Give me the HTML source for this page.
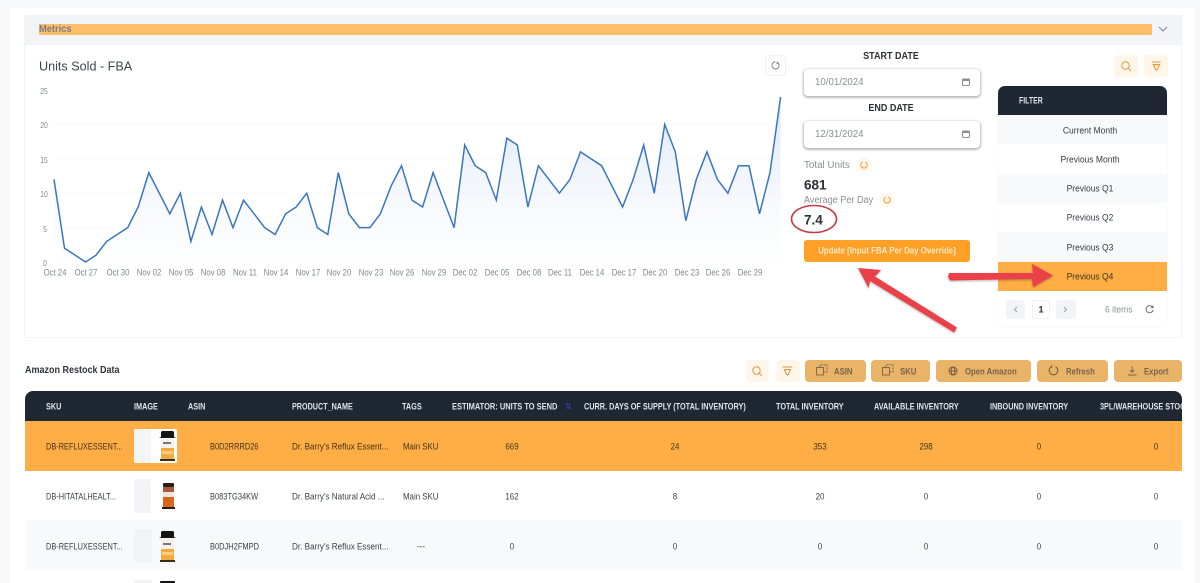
<!DOCTYPE html>
<html><head><meta charset="utf-8">
<style>
html,body{margin:0;padding:0}
body{width:1200px;height:583px;overflow:hidden;background:#fff;position:relative;font-family:"Liberation Sans",sans-serif;color:#333}
#w{position:absolute;left:0;top:0;width:1200px;height:583px;background:#fff;overflow:hidden;filter:blur(.35px)}
.b{position:absolute}
.t,.c{position:absolute;white-space:nowrap;line-height:1;margin-top:.5px}
.t{transform:translateY(-50%) scaleX(var(--s,1));transform-origin:left center}
.c{transform:translate(-50%,-50%) scaleX(var(--s,1))}
.ax{font-size:9px;color:#80868f;--s:.86}
.ay{font-size:8.5px;color:#80868f;--s:.8}
.h{font-size:9px;font-weight:bold;color:#dfe3ea;--s:.81}
.d{font-size:9px;color:#3a3f47;--s:.88}
.sk{--s:.82}.as{--s:.83}.pn{--s:.9}.tg{--s:.875}
.f{font-size:9px;color:#333a44;--s:.945}
.tb{position:absolute;top:360px;height:22px;background:#e9b368;border-radius:4px;font-size:9px;font-weight:bold;color:#76654c}
.tb span{position:absolute;top:50%;margin-top:.5px;transform:translateY(-50%) scaleX(.86);transform-origin:left center;white-space:nowrap;line-height:1}
.tb svg{position:absolute;top:4px}
.ib{position:absolute;background:#fff5e8;border-radius:4px}
svg{position:absolute;overflow:visible}
</style></head><body><div id="w">
<div class="b" style="left:0;top:0;width:1200px;height:8px;background:#f8f9fa"></div>
<div class="b" style="left:0;top:0;width:10px;height:583px;background:#f8f9fb"></div>
<div class="b" style="left:1195px;top:0;width:5px;height:583px;background:#f8f9fb"></div>

<!-- metrics panel -->
<div class="b" style="left:24px;top:15px;width:1158px;height:323px;border:1px solid #f1f2f4;border-radius:3px;box-sizing:border-box"></div>
<div class="b" style="left:25px;top:15px;width:1158px;height:30px;background:#f2f4f7"></div>
<div class="b" style="left:39px;top:24px;width:1113px;height:11px;background:#ffbe6b"></div>
<div class="t" style="left:39px;top:29.5px;font-size:10px;font-weight:bold;color:#7b7d80;--s:.93">Metrics</div>
<svg style="left:1158px;top:26px" width="10" height="6"><path d="M1 1l4 4 4-4" fill="none" stroke="#7d838c" stroke-width="1"/></svg>

<div class="t" style="left:39px;top:65px;font-size:13px;color:#3f444c;--s:.97">Units Sold - FBA</div>
<div class="b" style="left:765px;top:55px;width:21px;height:21px;border:1px solid #f0f1f3;border-radius:4px;box-sizing:border-box"></div>
<svg style="left:771px;top:61px" width="9" height="9" viewBox="0 0 9 9"><path d="M3 1.1A3.6 3.6 0 1 0 6 1.1M6 1.1V3M3 1.1L4 .4" fill="none" stroke="#777" stroke-width=".9"/></svg>

<!-- chart -->
<svg style="left:0;top:0" width="800" height="290">
<defs><linearGradient id="g" x1="0" y1="90" x2="0" y2="262" gradientUnits="userSpaceOnUse"><stop offset="0" stop-color="#bcd0ee" stop-opacity=".55"/><stop offset="1" stop-color="#e8effa" stop-opacity=".05"/></linearGradient></defs>
<g stroke="#f5f6f8" stroke-width=".6"><path d="M54 262H781M54 228H781M54 193H781M54 159H781M54 124H781"/></g>
<polygon fill="url(#g)" points="54,262 54,179.4 64.5,248.2 75.1,255.1 85.6,262 96.1,255.1 106.7,241.4 117.2,234.5 127.7,227.6 138.2,207 148.8,172.6 159.3,193.2 169.8,213.8 180.4,193.2 190.9,241.4 201.4,207 212,234.5 222.5,200.1 233,227.6 243.5,200.1 254.1,213.8 264.6,227.6 275.1,234.5 285.7,213.8 296.2,207 306.7,193.2 317.3,227.6 327.8,234.5 338.3,172.6 348.8,213.8 359.4,227.6 369.9,227.6 380.4,213.8 391,186.3 401.5,165.7 412,200.1 422.6,207 433.1,172.6 443.6,200.1 454.1,227.6 464.7,145 475.2,165.7 485.7,172.6 496.3,200.1 506.8,138.2 517.3,145 527.9,207 538.4,165.7 548.9,179.4 559.4,193.2 570,179.4 580.5,151.9 591,158.8 601.6,165.7 612.1,186.3 622.6,207 633.2,179.4 643.7,145 654.2,193.2 664.7,124.4 675.3,151.9 685.8,220.7 696.3,179.4 706.9,151.9 717.4,179.4 727.9,193.2 738.5,165.7 749,165.7 759.5,213.8 770,172.6 780.6,96.9 780.6,262"/>
<polyline fill="none" stroke="#3a75bf" stroke-width="1.5" points="54,179.4 64.5,248.2 75.1,255.1 85.6,262 96.1,255.1 106.7,241.4 117.2,234.5 127.7,227.6 138.2,207 148.8,172.6 159.3,193.2 169.8,213.8 180.4,193.2 190.9,241.4 201.4,207 212,234.5 222.5,200.1 233,227.6 243.5,200.1 254.1,213.8 264.6,227.6 275.1,234.5 285.7,213.8 296.2,207 306.7,193.2 317.3,227.6 327.8,234.5 338.3,172.6 348.8,213.8 359.4,227.6 369.9,227.6 380.4,213.8 391,186.3 401.5,165.7 412,200.1 422.6,207 433.1,172.6 443.6,200.1 454.1,227.6 464.7,145 475.2,165.7 485.7,172.6 496.3,200.1 506.8,138.2 517.3,145 527.9,207 538.4,165.7 548.9,179.4 559.4,193.2 570,179.4 580.5,151.9 591,158.8 601.6,165.7 612.1,186.3 622.6,207 633.2,179.4 643.7,145 654.2,193.2 664.7,124.4 675.3,151.9 685.8,220.7 696.3,179.4 706.9,151.9 717.4,179.4 727.9,193.2 738.5,165.7 749,165.7 759.5,213.8 770,172.6 780.6,96.9"/>
</svg>
<div class="c ay" style="left:43.5px;top:90px">25</div><div class="c ay" style="left:43.5px;top:124px">20</div><div class="c ay" style="left:43.5px;top:159px">15</div><div class="c ay" style="left:43.5px;top:193px">10</div><div class="c ay" style="left:44.5px;top:228px">5</div><div class="c ay" style="left:44.5px;top:262px">0</div>
<div class="c ax" style="left:54.5px;top:272px">Oct 24</div><div class="c ax" style="left:85.5px;top:272px">Oct 27</div><div class="c ax" style="left:117.5px;top:272px">Oct 30</div><div class="c ax" style="left:149px;top:272px">Nov 02</div><div class="c ax" style="left:181px;top:272px">Nov 05</div><div class="c ax" style="left:213px;top:272px">Nov 08</div><div class="c ax" style="left:244.5px;top:272px">Nov 11</div><div class="c ax" style="left:276px;top:272px">Nov 14</div><div class="c ax" style="left:308px;top:272px">Nov 17</div><div class="c ax" style="left:339px;top:272px">Nov 20</div><div class="c ax" style="left:371px;top:272px">Nov 23</div><div class="c ax" style="left:402px;top:272px">Nov 26</div><div class="c ax" style="left:434px;top:272px">Nov 29</div><div class="c ax" style="left:465px;top:272px">Dec 02</div><div class="c ax" style="left:497px;top:272px">Dec 05</div><div class="c ax" style="left:529px;top:272px">Dec 08</div><div class="c ax" style="left:560px;top:272px">Dec 11</div><div class="c ax" style="left:592px;top:272px">Dec 14</div><div class="c ax" style="left:624px;top:272px">Dec 17</div><div class="c ax" style="left:655px;top:272px">Dec 20</div><div class="c ax" style="left:687px;top:272px">Dec 23</div><div class="c ax" style="left:718px;top:272px">Dec 26</div><div class="c ax" style="left:750px;top:272px">Dec 29</div>

<!-- date column -->
<div class="c" style="left:890.5px;top:56.5px;font-size:10px;font-weight:bold;color:#2b2f36;--s:.9">START DATE</div>
<div class="b" style="left:804px;top:69px;width:176px;height:27px;background:#fff;border-radius:4px;box-shadow:0 1px 2px 1px rgba(0,0,0,.28)"></div>
<div class="t" style="left:815px;top:82.5px;font-size:10px;color:#8a8f96;--s:.97">10/01/2024</div>
<svg style="left:962px;top:78px" width="8" height="8"><rect x=".5" y="1" width="7" height="6.5" rx="1" fill="none" stroke="#8d8f92"/><rect x="1" y="1" width="6" height="2" fill="#8d8f92"/></svg>
<div class="c" style="left:890.5px;top:108.5px;font-size:10px;font-weight:bold;color:#2b2f36;--s:.9">END DATE</div>
<div class="b" style="left:804px;top:121px;width:176px;height:27px;background:#fff;border-radius:4px;box-shadow:0 1px 2px 1px rgba(0,0,0,.28)"></div>
<div class="t" style="left:815px;top:134.5px;font-size:10px;color:#8a8f96;--s:.97">12/31/2024</div>
<svg style="left:962px;top:130px" width="8" height="8"><rect x=".5" y="1" width="7" height="6.5" rx="1" fill="none" stroke="#8d8f92"/><rect x="1" y="1" width="6" height="2" fill="#8d8f92"/></svg>

<div class="t" style="left:804px;top:165px;font-size:10px;color:#8a8f96;--s:.98">Total Units</div>
<div class="b" style="left:857px;top:158px;width:14px;height:14px;background:#fff7ec;border-radius:7px"></div>
<svg style="left:860px;top:161px" width="8" height="8"><path d="M2.6 1A3.2 3.2 0 1 0 5.4 1" fill="none" stroke="#f2a23c" stroke-width="1.1"/></svg>
<div class="t" style="left:804px;top:184.5px;font-size:13.5px;font-weight:bold;color:#2b2f36">681</div>
<div class="t" style="left:804px;top:200px;font-size:10px;color:#8a8f96;--s:.91">Average Per Day</div>
<div class="b" style="left:880px;top:193px;width:14px;height:14px;background:#fff7ec;border-radius:7px"></div>
<svg style="left:883px;top:196px" width="8" height="8"><path d="M2.6 1A3.2 3.2 0 1 0 5.4 1" fill="none" stroke="#f2a23c" stroke-width="1.1"/></svg>
<div class="t" style="left:804px;top:219.5px;font-size:13.5px;font-weight:bold;color:#2b2f36">7.4</div>
<div class="b" style="left:804px;top:240px;width:166px;height:22px;background:#ffa126;border-radius:3px"></div>
<div class="c" style="left:887px;top:250.5px;font-size:9px;font-weight:bold;color:#ffe7c4;--s:.875">Update [Input FBA Per Day Override]</div>

<!-- filter panel -->
<div class="ib" style="left:1114px;top:55px;width:24px;height:22px"></div>
<svg style="left:1121px;top:61px" width="11" height="11"><circle cx="4.5" cy="4.5" r="3.7" fill="none" stroke="#e59a3a" stroke-width="1"/><path d="M7.3 7.3L10 10" stroke="#e59a3a"/></svg>
<div class="ib" style="left:1144px;top:55px;width:24px;height:22px"></div>
<svg style="left:1151px;top:61px" width="11" height="11"><path d="M.7 1h9M2.3 3.6h6.2L6 8.8H4.8z" fill="none" stroke="#e59a3a" stroke-width="1.1"/></svg>

<div class="b" style="left:998px;top:86px;width:169px;height:241px;border-radius:6px;box-shadow:0 0 1px rgba(0,0,0,.12)"></div>
<div class="b" style="left:998px;top:86px;width:169px;height:29px;background:#1f2733;border-radius:7px 7px 0 0"></div>
<div class="t" style="left:1019px;top:100.5px;font-size:9px;font-weight:bold;color:#e4e7ec;--s:.77">FILTER</div>
<div class="b" style="left:998px;top:115px;width:169px;height:29px;background:#f8f9fb"></div>
<div class="b" style="left:998px;top:174px;width:169px;height:29px;background:#f8f9fb"></div>
<div class="b" style="left:998px;top:232px;width:169px;height:30px;background:#f8f9fb"></div>
<div class="b" style="left:998px;top:262px;width:169px;height:29px;background:#ffad45"></div>
<div class="c f" style="left:1090px;top:130px">Current Month</div>
<div class="c f" style="left:1090px;top:159px">Previous Month</div>
<div class="c f" style="left:1090px;top:188.5px">Previous Q1</div>
<div class="c f" style="left:1090px;top:217.5px">Previous Q2</div>
<div class="c f" style="left:1090px;top:247px">Previous Q3</div>
<div class="c f" style="left:1090px;top:276px;color:#3d3320">Previous Q4</div>
<div class="b" style="left:1006px;top:300px;width:19px;height:19px;background:#f2f4f7;border-radius:3px"></div>
<svg style="left:1013px;top:306px" width="5" height="7"><path d="M4 1L1.5 3.5 4 6" fill="none" stroke="#9ba1a9"/></svg>
<div class="b" style="left:1032px;top:300px;width:18px;height:19px;border:1px solid #f0f1f3;border-radius:3px;box-sizing:border-box"></div>
<div class="c" style="left:1041px;top:309.5px;font-size:9px;font-weight:bold;color:#2b2f36">1</div>
<div class="b" style="left:1056px;top:300px;width:20px;height:19px;background:#f2f4f7;border-radius:3px"></div>
<svg style="left:1063px;top:306px" width="5" height="7"><path d="M1 1l2.5 2.5L1 6" fill="none" stroke="#9ba1a9"/></svg>
<div class="t" style="left:1105px;top:309.5px;font-size:9px;color:#8a8f96;--s:.95">6 items</div>
<svg style="left:1145px;top:305px" width="9" height="9"><path d="M7.8 2.4A3.6 3.6 0 1 0 8.2 5M8 .6v2.2H5.8" fill="none" stroke="#666" stroke-width=".9"/></svg>

<!-- restock toolbar -->
<div class="t" style="left:24.5px;top:370.5px;font-size:10px;font-weight:bold;color:#2f343b;--s:.9">Amazon Restock Data</div>
<div class="ib" style="left:746px;top:360px;width:23px;height:22px"></div>
<svg style="left:752px;top:366px" width="11" height="11"><circle cx="4.5" cy="4.5" r="3.7" fill="none" stroke="#d99a48"/><path d="M7.3 7.3L10 10" stroke="#d99a48"/></svg>
<div class="ib" style="left:776px;top:360px;width:24px;height:22px"></div>
<svg style="left:782px;top:366px" width="11" height="11"><path d="M.7 1h9M2.3 3.6h6.2L6 8.8H4.8z" fill="none" stroke="#d99a48" stroke-width="1.1"/></svg>

<div class="tb" style="left:805px;width:61px"><svg style="left:11px" width="12" height="12" fill="none" stroke="#7a6546" stroke-width=".9"><rect x=".5" y="3.5" width="7" height="7.5"/><path d="M4 3V.8h7V8H8" stroke-dasharray="2 1"/></svg><span style="left:29px">ASIN</span></div>
<div class="tb" style="left:871px;width:59px"><svg style="left:11px" width="12" height="12" fill="none" stroke="#7a6546" stroke-width=".9"><rect x=".5" y="3.5" width="7" height="7.5"/><path d="M4 3V.8h7V8H8" stroke-dasharray="2 1"/></svg><span style="left:29px">SKU</span></div>
<div class="tb" style="left:936px;width:95px"><svg style="left:12px;top:6px" width="10" height="10" fill="none" stroke="#6e5c40" stroke-width=".9"><circle cx="5" cy="5" r="4"/><ellipse cx="5" cy="5" rx="1.8" ry="4"/><path d="M1 5h8"/></svg><span style="left:29px">Open Amazon</span></div>
<div class="tb" style="left:1037px;width:71px"><svg style="left:11px;top:5px" width="11" height="11" fill="none" stroke="#6e5c40" stroke-width="1"><path d="M3.4 1.8A4.3 4.3 0 1 0 7.6 1.8M3.6 .4v2.4"/></svg><span style="left:29px">Refresh</span></div>
<div class="tb" style="left:1114px;width:68px"><svg style="left:13px;top:5px" width="11" height="11" fill="none" stroke="#7a6546" stroke-width=".9"><path d="M1 10h8.5M5.2 1v6M3.2 5.2l2 2 2-2"/></svg><span style="left:30px">Export</span></div>

<!-- table -->
<div class="b" style="left:25px;top:391px;width:1157px;height:192px;overflow:hidden;border-radius:8px 8px 0 0">
 <div class="b" style="left:0;top:0;width:1157px;height:30px;background:#1f2733"></div>
 <div class="b" style="left:0;top:30px;width:1157px;height:50px;background:#ffad45"></div>
 <div class="b" style="left:0;top:129px;width:1157px;height:50px;background:#f8f9fb"></div>
 <div class="t h" style="left:21px;top:15px">SKU</div>
 <div class="t h" style="left:109px;top:15px">IMAGE</div>
 <div class="t h" style="left:163px;top:15px">ASIN</div>
 <div class="t h" style="left:267px;top:15px;--s:.8">PRODUCT_NAME</div>
 <div class="t h" style="left:377px;top:15px">TAGS</div>
 <div class="t h" style="left:426.5px;top:15px;--s:.83">ESTIMATOR: UNITS TO SEND</div>
 <div class="t" style="left:540px;top:15.5px;font-size:8px;font-weight:bold;color:#2c3a9c">⇅</div>
 <div class="t h" style="left:559px;top:15px">CURR. DAYS OF SUPPLY (TOTAL INVENTORY)</div>
 <div class="t h" style="left:751px;top:15px">TOTAL INVENTORY</div>
 <div class="t h" style="left:849px;top:15px">AVAILABLE INVENTORY</div>
 <div class="t h" style="left:965px;top:15px">INBOUND INVENTORY</div>
 <div class="t h" style="left:1075px;top:15px">3PL/WAREHOUSE STOCK</div>

 <div class="t d sk" style="left:21px;top:55px;color:#42331b">DB-REFLUXESSENT...</div>
 <div class="t d as" style="left:185px;top:55px;color:#42331b">B0D2RRRD26</div>
 <div class="t d pn" style="left:267px;top:55px;color:#42331b">Dr. Barry's Reflux Essent...</div>
 <div class="t d tg" style="left:378px;top:55px;color:#42331b">Main SKU</div>
 <div class="c d" style="left:487px;top:55px;color:#42331b">669</div>
 <div class="c d" style="left:650px;top:55px;color:#42331b">24</div>
 <div class="c d" style="left:795px;top:55px;color:#42331b">353</div>
 <div class="c d" style="left:901px;top:55px;color:#42331b">298</div>
 <div class="c d" style="left:1014px;top:55px;color:#42331b">0</div>
 <div class="c d" style="left:1131px;top:55px;color:#42331b">0</div>

 <div class="t d sk" style="left:21px;top:105px">DB-HITATALHEALT...</div>
 <div class="t d as" style="left:185px;top:105px">B083TG34KW</div>
 <div class="t d pn" style="left:267px;top:105px">Dr. Barry's Natural Acid ...</div>
 <div class="t d tg" style="left:378px;top:105px">Main SKU</div>
 <div class="c d" style="left:487px;top:105px">162</div>
 <div class="c d" style="left:650px;top:105px">8</div>
 <div class="c d" style="left:795px;top:105px">20</div>
 <div class="c d" style="left:901px;top:105px">0</div>
 <div class="c d" style="left:1014px;top:105px">0</div>
 <div class="c d" style="left:1131px;top:105px">0</div>

 <div class="t d sk" style="left:21px;top:155px">DB-REFLUXESSENT...</div>
 <div class="t d as" style="left:185px;top:155px">B0DJH2FMPD</div>
 <div class="t d pn" style="left:267px;top:155px">Dr. Barry's Reflux Essent...</div>
 <div class="c d" style="left:396px;top:155px">---</div>
 <div class="c d" style="left:487px;top:155px">0</div>
 <div class="c d" style="left:650px;top:155px">0</div>
 <div class="c d" style="left:795px;top:155px">0</div>
 <div class="c d" style="left:901px;top:155px">0</div>
 <div class="c d" style="left:1014px;top:155px">0</div>
 <div class="c d" style="left:1131px;top:155px">0</div>

 <!-- images -->
 <div class="b" style="left:109px;top:38px;width:43px;height:34px;background:#fff;border-radius:2px"></div>
 <div class="b" style="left:109px;top:38px;width:17px;height:34px;background:#f3f5f8;border-radius:2px 0 0 2px"></div>
 <svg style="left:134px;top:39px" width="18" height="32"><path d="M3 1h11l1 1v5l2 1H0l2-1V2z" fill="#141414"/><rect x="2" y="9" width="13" height="9" fill="#f5f1ea"/><rect x="4" y="12" width="8" height="2" fill="#777"/><rect x="2" y="18" width="13" height="11" fill="#f4aa3e"/><rect x="3" y="21" width="11" height="3" fill="#f8cf86"/><rect x="1" y="29" width="15" height="2" fill="#3a2b17"/></svg>
 <div class="b" style="left:109px;top:88px;width:17px;height:34px;background:#f1f3f6;border-radius:2px"></div>
 <svg style="left:136px;top:92px" width="15" height="27"><rect x="2" y="0" width="11" height="4" rx="1" fill="#2a1d15"/><path d="M2 4h11v5H2z" fill="#a8593a"/><rect x="2" y="9" width="11" height="5" fill="#eee4da"/><rect x="2" y="14" width="11" height="10" fill="#d9661f"/><rect x="1" y="24" width="13" height="2" fill="#2b1c12"/></svg>
 <div class="b" style="left:109px;top:138px;width:18px;height:33px;background:#f1f3f6;border-radius:2px"></div>
 <svg style="left:134px;top:139px" width="18" height="33"><path d="M3 1h11l1 1v5l2 1H0l2-1V2z" fill="#141414"/><rect x="2" y="9" width="13" height="10" fill="#f5f1ea"/><rect x="4" y="13" width="8" height="2" fill="#777"/><rect x="2" y="19" width="13" height="11" fill="#f4aa3e"/><rect x="3" y="22" width="11" height="3" fill="#f8cf86"/><rect x="1" y="30" width="15" height="2" fill="#3a2b17"/></svg>
 <div class="b" style="left:109px;top:189px;width:18px;height:10px;background:#f1f3f6"></div>
 <svg style="left:134px;top:190px" width="18" height="8"><rect x="1" y="0" width="15" height="7" rx="1" fill="#141414"/></svg>
</div>

<!-- annotations -->
<svg style="left:0;top:0" width="1200" height="583">
 <defs><filter id="s" x="-20%" y="-20%" width="140%" height="140%"><feDropShadow dx="0" dy="1" stdDeviation="1" flood-color="#000" flood-opacity=".3"/></filter></defs>
 <ellipse cx="814" cy="219" rx="22.5" ry="13.5" fill="none" stroke="#c63a44" stroke-width="1.6"/>
 <g fill="#ea3f4a" filter="url(#s)">
  <polygon points="949,273 1033,273 1032,264 1053,275.5 1033,287 1032,279 950,280.5 948,277"/>
  <polygon points="858,268 881,270 875,276.5 957,327.5 954,332.5 870,281 868.5,288"/>
 </g>
</svg>
</div></body></html>
